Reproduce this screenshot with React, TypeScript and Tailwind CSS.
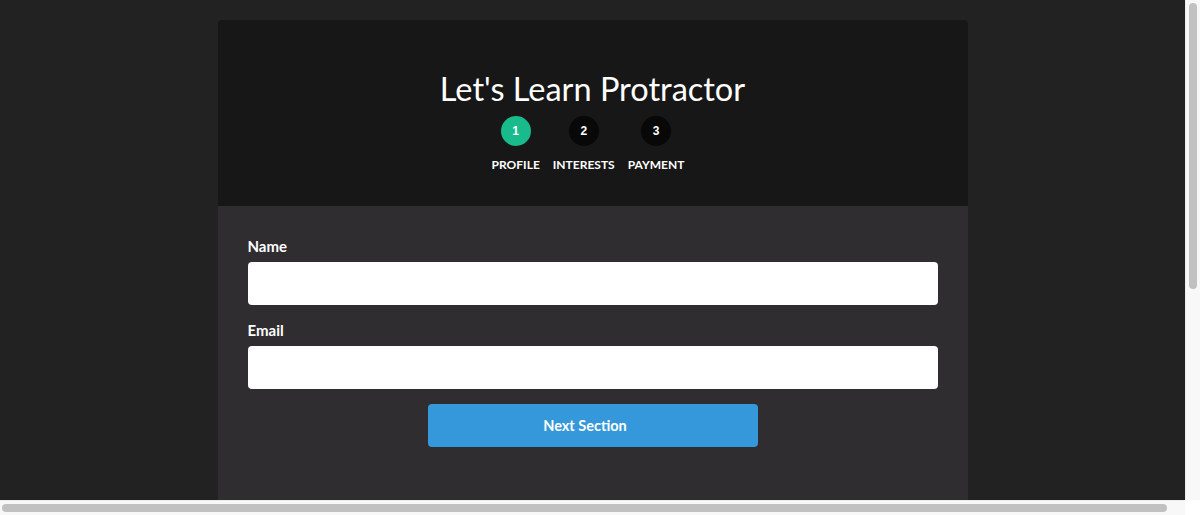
const steps = [
  { n: '1', label: 'PROFILE', active: true },
  { n: '2', label: 'INTERESTS', active: false },
  { n: '3', label: 'PAYMENT', active: false },
]

function Field({ label }: { label: string }) {
  return (
    <div className="mb-[15px]">
      <label className="block text-[15px] leading-5 font-bold text-white mb-[6px]">{label}</label>
      <input type="text" className="block w-full h-[43px] rounded bg-white px-3 text-gray-900 outline-none" />
    </div>
  )
}

export default function App() {
  return (
    <div className="h-[515px] flex flex-col overflow-hidden font-['Lato',_'Liberation_Sans',_sans-serif]">
      <div className="flex flex-1 min-h-0">
        <main className="flex-1 bg-[#222222] pt-5 overflow-hidden">
          <div className="mx-auto w-[750px] rounded overflow-hidden">
            <div className="bg-[#171717] pt-[50px] pb-[33px] flex flex-col items-center">
              <h1 className="text-[32.5px] leading-[38px] font-normal text-white">Let's Learn Protractor</h1>
              <div className="flex mt-2 ml-[4px]">
                {steps.map(s => (
                  <div key={s.n} className="flex flex-col items-center mr-[13px]">
                    <div
                      className={`size-[30px] rounded-full flex items-center justify-center text-xs font-bold text-white font-['Liberation_Sans',_sans-serif] ${
                        s.active ? 'bg-[#19ba8b]' : 'bg-[#080808]'
                      }`}
                    >
                      {s.n}
                    </div>
                    <span className="mt-[11px] text-xs leading-4 font-bold text-white">{s.label}</span>
                  </div>
                ))}
              </div>
            </div>
            <div className="bg-[#2f2d30] px-[30px] pt-[30px] pb-[60px]">
              <Field label="Name" />
              <Field label="Email" />
              <button className="block mx-auto w-[330px] h-[43px] rounded bg-[#3498db] text-white text-[14.5px] font-bold pr-[15px]">
                Next Section
              </button>
            </div>
          </div>
        </main>
        {/* vertical scrollbar */}
        <div className="w-[15px] shrink-0 bg-[#f8f8f8] border-l border-[#ececec] pt-[3px] pl-[3px]">
          <div className="w-2 h-[286px] rounded-full bg-[#c1c1c1]" />
        </div>
      </div>
      {/* horizontal scrollbar */}
      <div className="h-[15px] shrink-0 flex">
        <div className="flex-1 bg-[#f8f8f8] border-t border-[#ececec] pl-[2px] pt-[3px]">
          <div className="w-[1165px] h-2 rounded-full bg-[#c1c1c1]" />
        </div>
        <div className="w-[15px] bg-white" />
      </div>
    </div>
  )
}
